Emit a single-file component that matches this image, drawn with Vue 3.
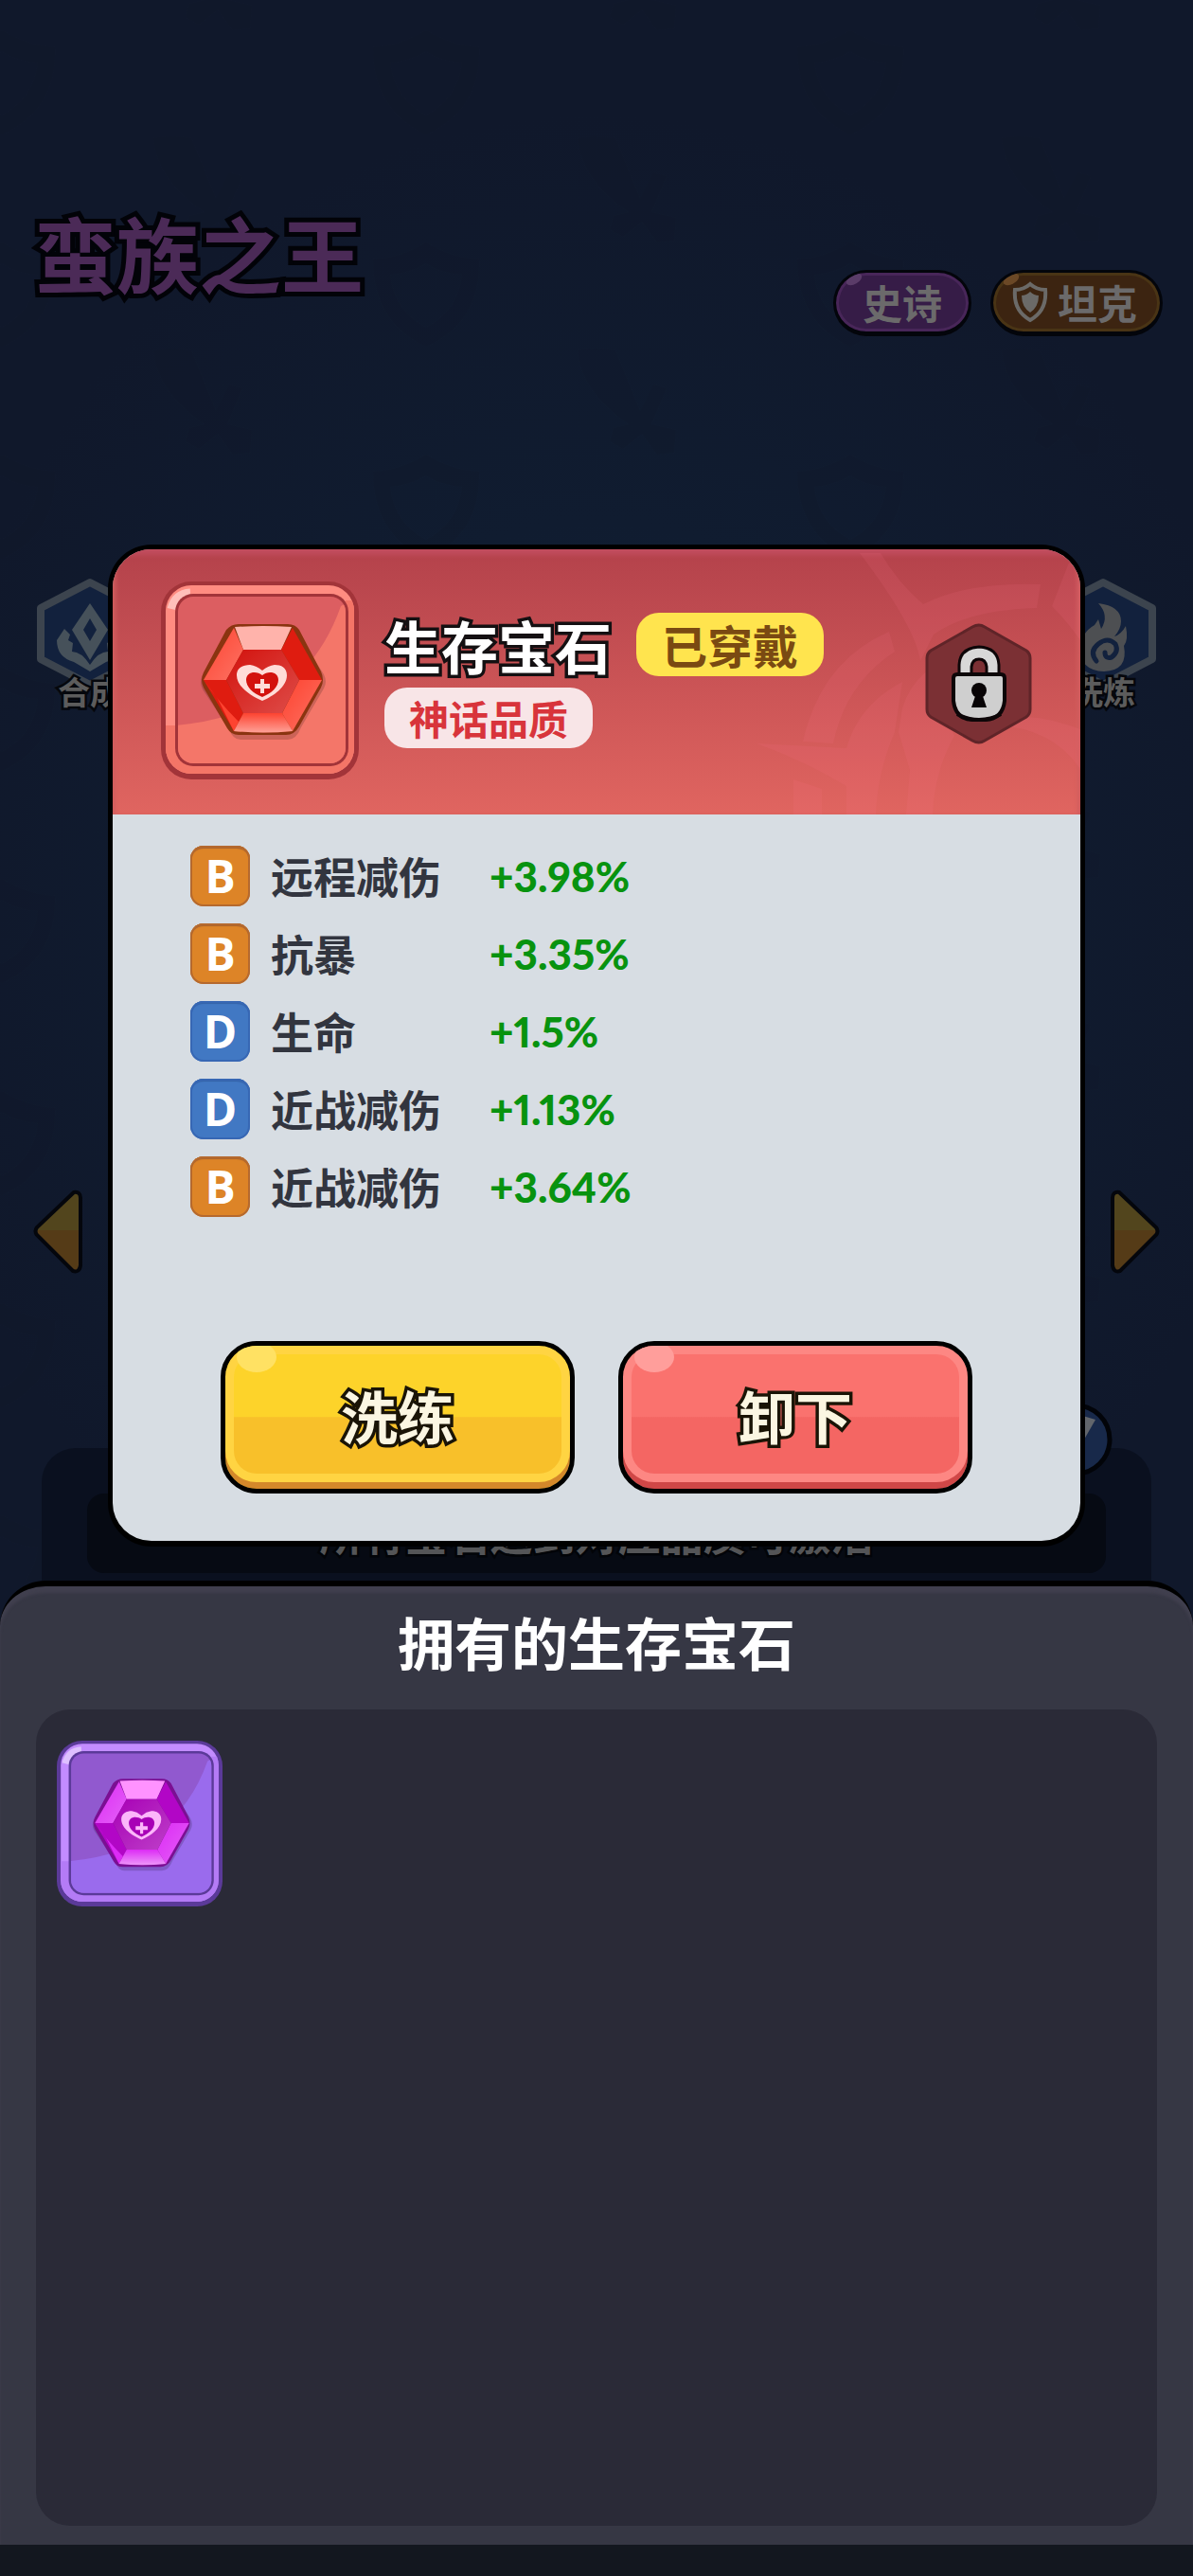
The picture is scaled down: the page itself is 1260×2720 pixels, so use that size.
<script setup>
import { ref } from "vue";

const stats = [
  { grade: "B", name: "远程减伤", value: "+3.98%" },
  { grade: "B", name: "抗暴", value: "+3.35%" },
  { grade: "D", name: "生命", value: "+1.5%" },
  { grade: "D", name: "近战减伤", value: "+1.13%" },
  { grade: "B", name: "近战减伤", value: "+3.64%" },
];

const locked = ref(true);
const worn = ref(true);

function toggleLock() {
  locked.value = !locked.value;
}
</script>

<template>
  <div class="page">
    <!-- shared gem tile, coloured through the --g-* variables -->
    <svg class="defs" width="0" height="0" aria-hidden="true">
      <defs>
        <linearGradient id="shine" x1="0" y1="0" x2="1" y2="1">
          <stop offset="0" stop-color="#fff" stop-opacity="0" />
          <stop offset="1" stop-color="#fff" stop-opacity="0.25" />
        </linearGradient>
        <linearGradient id="shineDown" x1="0" y1="0" x2="0" y2="1">
          <stop offset="0" stop-color="#fff" stop-opacity="0" />
          <stop offset="1" stop-color="#fff" stop-opacity="0.5" />
        </linearGradient>
        <clipPath id="tileInner">
          <rect x="18" y="16" width="177" height="176" rx="16" />
        </clipPath>
        <clipPath id="tileFrame">
          <rect x="5" y="4" width="199" height="199" rx="27" />
        </clipPath>
      </defs>
      <symbol id="gemTile" viewBox="0 0 209 209">
        <rect class="g-line" width="209" height="209" rx="32" />
        <g clip-path="url(#tileFrame)">
          <rect class="g-frame" width="209" height="209" />
          <path class="g-frame-low" d="M0 152 H209 V209 H0z M195 20 H209 V209 H195z" />
        </g>
        <path d="M11 29 Q15 13 31 12" fill="none" stroke="#fff" stroke-opacity="0.45" stroke-width="9" />
        <rect class="g-line" x="15" y="13" width="183" height="182" rx="19" />
        <g clip-path="url(#tileInner)">
          <rect class="g-bg" x="15" y="13" width="183" height="182" />
          <path class="g-bg-low" d="M15 152 Q150 140 190 26 L200 20 V200 H15z" />
        </g>
        <g class="g-stone">
          <path d="M84 54 H136 Q144 54 148 60 L172 98 Q176 106 172 113 L148 154 Q143 167 134 167 H84 Q76 167 72 156 L44 114 Q40 106 44 99 L70 60 Q75 54 84 54z" fill="#000" fill-opacity="0.16" />
          <path class="g-edge" d="M82 45 H134 Q142 45 146 51 L169 95 Q173 104 169 112 L146 153 Q141 162 132 162 H82 Q74 162 70 155 L45 112 Q41 104 45 96 L69 51 Q74 45 82 45z" />
          <path class="g-top" d="M78 48 Q108 46 138 48 L127 72 H87z" />
          <path class="g-left" d="M77 49 L87 72 L69 104 H45z" />
          <path class="g-right" d="M139 49 L127 72 L146 104 H170z" />
          <path class="g-right" d="M45 104 H69 L87 139 L77 158z" />
          <path class="g-left" d="M45 104 L60 124 L77 158 L82 148 Q60 126 45 104z" />
          <path class="g-left" d="M170 104 H146 L128 139 L139 158z" />
          <path class="g-left" d="M77 158 L87 139 H128 L139 158 Q108 161 77 158z" />
          <path d="M77 158 L87 139 H128 L139 158 Q108 161 77 158z" fill="url(#shineDown)" />
          <path d="M77 49 L87 72 L69 104 H45z" fill="url(#shine)" />
          <path d="M170 104 H146 L128 139 L139 158z" fill="url(#shine)" />
          <path class="g-core" d="M87 72 H127 L146 104 L128 139 H87 L69 104z" />
          <path d="M87 72 H127 L146 104 L128 139 H87 L69 104z" fill="url(#shine)" />
          <path class="g-mark" d="M107 126 C95 121 80 111 80 99 C80 91 87 88 94 88 Q101 89 107 94 Q113 89 120 88 C127 88 133 91 133 99 C133 111 119 121 107 126z" />
          <path class="g-core" d="M107 122 C97 118 90 111 90 104 C90 95 101 94 107 99 C113 94 124 95 124 104 C124 111 117 118 107 122z" />
          <path class="g-mark" d="M105 103 h4 v5 h6 v5 h-6 v5 h-4 v-5 h-6 v-5 h6z" />
        </g>
      </symbol>
    </svg>

    <main class="stage">
      <svg class="stage__pattern" width="100%" height="100%" aria-hidden="true">
        <defs>
          <pattern id="motif" x="60" y="144" width="448" height="224" patternUnits="userSpaceOnUse">
            <g fill="#0b1222" fill-opacity="0.14">
              <path d="M102 2 Q118 -2 142 2 L168 66 L182 38 L196 42 L180 80 L206 86 L204 110 L186 112 L170 90 L150 106 L136 98 L140 84 L156 80 Q106 46 102 2z" />
              <path d="M334 130 Q364 128 390 112 Q416 128 446 130 Q448 196 390 222 Q334 196 334 130z M352 146 Q356 184 390 202 Q424 184 428 146 Q404 144 390 134 Q374 144 352 146z" fill-rule="evenodd" />
            </g>
          </pattern>
        </defs>
        <rect width="100%" height="100%" fill="url(#motif)" />
      </svg>

      <header class="hero">
        <h1 class="hero__name">蛮族之王</h1>
        <div class="hero__tags">
          <span class="tag tag--epic">史诗</span>
          <span class="tag tag--tank">
            <svg width="38" height="44" viewBox="0 0 38 44" aria-hidden="true">
              <path d="M19 3 Q26 9 35 9 Q37 31 19 41 Q1 31 3 9 Q12 9 19 3z" fill="none" stroke="#6b6a68" stroke-width="4" />
              <path d="M19 11 Q23 15 28 15 Q28 27 19 33 Q10 27 10 15 Q15 15 19 11z" fill="#6b6a68" />
            </svg>
            坦克
          </span>
        </div>
      </header>

      <nav class="tools">
        <button class="tool" type="button">
          <svg class="tool__icon" width="114" height="118" viewBox="0 0 114 118" aria-hidden="true">
            <path d="M57 5 L109 32 V86 L57 113 L5 86 V32z" fill="#12213d" stroke="#3c444e" stroke-width="8" stroke-linejoin="round" />
            <path fill-rule="evenodd" d="M57 27 L76 55 L57 87 L38 55z M57 43 L50 55 L57 67 L64 55z" fill="#46515a" />
            <path d="M30 54 L22 66 Q22 84 40 89 L57 99 L74 89 Q92 84 92 66 L84 54 L78 60 L80 66 L75 69 L76 78 Q66 78 57 92 Q48 78 38 78 L39 69 L34 66 L36 60z" fill="#46515a" />
          </svg>
          <span class="tool__label">合成</span>
        </button>
        <button class="tool" type="button">
          <svg class="tool__icon" width="114" height="118" viewBox="0 0 114 118" aria-hidden="true">
            <path d="M57 5 L109 32 V86 L57 113 L5 86 V32z" fill="#12213d" stroke="#3c444e" stroke-width="8" stroke-linejoin="round" />
            <path d="M52 27 Q76 30 76 46 Q76 54 69 62 Q76 60 81 51 Q84 66 79 72 Q84 98 58 99 Q32 98 33 74 Q34 58 48 50 L52 44 L55 54 Q64 40 52 27z" fill="#4d4f52" />
            <path d="M50 88 Q42 78 52 70 Q62 62 70 70 Q74 78 66 84 Q59 86 59 79" fill="none" stroke="#12213d" stroke-width="5" stroke-linecap="round" />
          </svg>
          <span class="tool__label">洗炼</span>
        </button>
      </nav>

      <div class="pager">
        <button class="pager__btn" type="button" aria-label="上一个">
          <svg width="53" height="90" viewBox="0 0 53 90" aria-hidden="true">
            <path d="M43 3 Q50 2 50 9 V80 Q49 88 42 86 L4 48 Q1 44 4 40z" fill="#553b17" />
            <path d="M43 3 Q50 2 50 9 V43 H3z" fill="#52451d" />
            <path d="M43 3 Q50 2 50 9 V80 Q49 88 42 86 L4 48 Q1 44 4 40z" fill="none" stroke="#04060c" stroke-width="4" />
          </svg>
        </button>
        <button class="pager__btn pager__btn--next" type="button" aria-label="下一个">
          <svg width="53" height="90" viewBox="0 0 53 90" aria-hidden="true">
            <path d="M43 3 Q50 2 50 9 V80 Q49 88 42 86 L4 48 Q1 44 4 40z" fill="#553b17" />
            <path d="M43 3 Q50 2 50 9 V43 H3z" fill="#52451d" />
            <path d="M43 3 Q50 2 50 9 V80 Q49 88 42 86 L4 48 Q1 44 4 40z" fill="none" stroke="#04060c" stroke-width="4" />
          </svg>
        </button>
      </div>

      <section class="require">
        <span class="require__badge">
          <svg width="78" height="78" viewBox="0 0 78 78" aria-hidden="true">
            <circle cx="39" cy="39" r="36" fill="#18294a" stroke="#020409" stroke-width="5" />
            <path d="M20 6 L60 18 L44 46 L24 40z" fill="#62666c" />
          </svg>
        </span>
        <p class="require__text">所有宝石达到对应品质可激活</p>
      </section>
    </main>

    <section class="sheet">
      <h2 class="sheet__title">拥有的生存宝石</h2>
      <div class="sheet__bag">
        <button class="gem gem--purple" type="button" aria-label="生存宝石">
          <svg width="175" height="175"><use href="#gemTile" /></svg>
        </button>
      </div>
    </section>
    <footer class="home-bar"></footer>

    <section class="modal" role="dialog" aria-labelledby="gem-name">
      <div class="modal__header">
        <svg class="modal__emblem" width="350" height="280" viewBox="0 0 350 280" aria-hidden="true">
          <g fill="#ff7a94" fill-opacity="0.11">
            <path d="M117 4 L139 4 Q158 36 184 58 Q232 34 308 37 L304 62 Q232 64 195 90 L181 118 Q176 82 117 4z" />
            <path d="M320 60 L338 14 Q350 22 350 44 V96 Q336 76 320 60z" />
            <path d="M148 87 L154 108 Q102 142 89 205 L57 203 Q76 118 148 87z" />
            <path d="M8 205 L103 210 Q116 164 162 140 L154 193 Q136 234 134 280 H103 V250 Q60 224 8 205z" />
            <path d="M47 243 L77 253 V280 H47z" />
            <path d="M158 193 L162 168 Q176 120 240 104 L200 150 L217 197 Q196 234 194 280 H166 L170 233z" />
            <path d="M217 197 Q270 160 350 190 V232 Q320 188 260 186 Q230 190 217 197z" />
          </g>
        </svg>
        <div class="gem gem--red">
          <svg width="209" height="209"><use href="#gemTile" /></svg>
        </div>
        <div class="modal__info">
          <div class="modal__name-row">
            <h2 id="gem-name" class="modal__name">生存宝石</h2>
            <span v-if="worn" class="pill pill--worn">已穿戴</span>
          </div>
          <span class="pill pill--quality">神话品质</span>
        </div>
        <button class="lock" type="button" aria-label="锁定" :aria-pressed="locked" @click="toggleLock">
          <svg width="113" height="128" viewBox="0 0 113 128" aria-hidden="true">
            <path d="M50 4 Q57 0 63 4 L107 29 Q111 32 111 37 V91 Q111 96 107 99 L63 124 Q57 128 50 124 L6 99 Q2 96 2 91 V37 Q2 32 6 29z" fill="#7b3034" stroke="#5f2428" stroke-width="3" />
            <path d="M36 54 V44 Q37 26 57 25 Q77 26 78 44 V54 H65 V46 Q64 38 57 38 Q50 38 49 46 V54z" fill="#d8d8d8" stroke="#0d0608" stroke-width="3" />
            <path d="M34 54 H80 Q84 54 84 58 V82 Q82 101 64 102 H50 Q32 101 30 82 V58 Q30 54 34 54z" fill="#cfcfcf" stroke="#0d0608" stroke-width="4" />
            <path d="M34 96 Q44 102 57 102 Q70 102 80 96" fill="none" stroke="#0d0608" stroke-width="4" />
            <circle cx="57" cy="71" r="8" fill="#080406" />
            <path d="M54 74 H60 L65 89 H49z" fill="#080406" />
          </svg>
        </button>
      </div>

      <div class="modal__body">
        <ul class="stats">
          <li v-for="(stat, i) in stats" :key="i" class="stat">
            <span class="stat__grade" :class="'stat__grade--' + stat.grade.toLowerCase()">{{ stat.grade }}</span>
            <span class="stat__name">{{ stat.name }}</span>
            <span class="stat__value">{{ stat.value }}</span>
          </li>
        </ul>
        <div class="modal__actions">
          <button class="btn btn--yellow" type="button"><span class="btn__face">洗练</span></button>
          <button class="btn btn--red" type="button" @click="worn = false"><span class="btn__face">卸下</span></button>
        </div>
      </div>
    </section>
  </div>
</template>

<style>
body {
  background: #13171f;
}
</style>

<style scoped>
.page {
  position: relative;
  display: flex;
  flex-direction: column;
  min-height: 100vh;
  overflow: hidden;
  font-family: "Noto Sans CJK SC", sans-serif;
  font-weight: 700;
  background: radial-gradient(ellipse 720px 860px at 50% 980px, #10213a 0%, #101c30 50%, #10182b 100%);
}

h1,
h2,
p,
ul {
  margin: 0;
  padding: 0;
}

button {
  padding: 0;
  border: 0;
  background: none;
  font: inherit;
  cursor: pointer;
}

svg {
  display: block;
}

.defs {
  position: absolute;
}

/* stage */
.stage {
  position: relative;
  display: flex;
  flex-direction: column;
  padding-top: 220px;
}

.stage__pattern {
  position: absolute;
  inset: 0;
}

.hero {
  position: relative;
  display: flex;
  justify-content: space-between;
  align-items: flex-end;
  height: 135px;
  padding: 0 32px 0 36px;
}

.hero__name {
  align-self: flex-start;
  font-size: 87px;
  line-height: 92px;
  color: #4b2a57;
  -webkit-text-stroke: 10px #020308;
  paint-order: stroke fill;
  text-shadow: 0 4px 0 #020308;
}

.hero__tags {
  display: flex;
  gap: 20px;
}

.tag {
  position: relative;
  display: flex;
  align-items: center;
  gap: 10px;
  height: 70px;
  box-sizing: border-box;
  border: 3px solid #03050b;
  border-bottom-width: 5px;
  border-radius: 36px;
  font-size: 42px;
  line-height: 60px;
  color: #6b6a6b;
  overflow: hidden;
}

.tag::before {
  content: "";
  position: absolute;
  left: 10px;
  top: 2px;
  width: 18px;
  height: 10px;
  border-radius: 50%;
  transform: rotate(-30deg);
}

.tag--epic {
  padding: 0 28px;
  background: #361c47;
  box-shadow: inset 0 0 0 3px #482659;
}

.tag--epic::before {
  background: #5a3c68;
}

.tag--tank {
  padding: 0 24px 0 20px;
  background: #3c2411;
  box-shadow: inset 0 0 0 3px #493415;
}

.tag--tank::before {
  background: #6b4826;
}

.tools {
  position: relative;
  display: flex;
  justify-content: space-between;
  height: 140px;
  margin: 255px 38px 0;
}

.tool {
  display: flex;
  flex-direction: column;
  align-items: center;
}

.tool__label {
  margin-top: -18px;
  font-size: 34px;
  line-height: 40px;
  color: #5c5c5c;
  -webkit-text-stroke: 5px #05070c;
  paint-order: stroke fill;
}

.pager {
  position: relative;
  display: flex;
  justify-content: space-between;
  margin: 506px 35px 0;
}

.pager__btn--next {
  transform: scaleX(-1);
}

.require {
  position: relative;
  height: 140px;
  margin: 183px 44px 0;
  padding: 48px 48px 0;
  box-sizing: border-box;
  border-radius: 36px 36px 0 0;
  background: #0a101f;
}

.require__badge {
  position: absolute;
  top: -48px;
  right: 41px;
}

.require__text {
  height: 84px;
  border-radius: 18px;
  font-size: 45px;
  line-height: 84px;
  text-align: center;
  color: #545557;
  background: #060a13;
  -webkit-text-stroke: 5px #020408;
  paint-order: stroke fill;
}

/* bottom sheet */
.sheet {
  position: relative;
  flex: 1;
  display: flex;
  flex-direction: column;
  gap: 38px;
  padding: 24px 38px 20px;
  border-top: 6px solid #000;
  border-radius: 48px 48px 0 0;
  background: #363744;
  box-shadow: inset 0 7px 3px #403f4e;
}

.sheet__title {
  font-size: 60px;
  line-height: 68px;
  text-align: center;
  color: #fff;
}

.sheet__bag {
  flex: 1;
  display: flex;
  flex-wrap: wrap;
  align-content: flex-start;
  gap: 20px;
  padding: 33px 22px;
  border-radius: 36px;
  background: #2a2a37;
}

.home-bar {
  position: relative;
  height: 33px;
  background: #13171f;
}

/* gem colours */
.gem--red {
  --g-line: #a23439;
  --g-frame: #ff8c81;
  --g-frame-low: #f47567;
  --g-bg: #dc5e61;
  --g-bg-low: #f47669;
  --g-edge: #8a3410;
  --g-top: #ffb3ab;
  --g-left: #fd4330;
  --g-right: #df1c10;
  --g-core: #d3120d;
  --g-mark: #ffdcd8;
  --g-scale: 1;
}

.gem--purple {
  --g-line: #5b3a99;
  --g-frame: #c38cff;
  --g-frame-low: #b47bf6;
  --g-bg: #9159cf;
  --g-bg-low: #9a6bed;
  --g-edge: #7b0f93;
  --g-top: #ff92ff;
  --g-left: #dc2bf5;
  --g-right: #b206c6;
  --g-core: #a800b6;
  --g-mark: #fcb6fa;
  --g-scale: 0.95;
}

.g-line { fill: var(--g-line); }
.g-frame { fill: var(--g-frame); }
.g-frame-low { fill: var(--g-frame-low); }
.g-bg { fill: var(--g-bg); }
.g-bg-low { fill: var(--g-bg-low); }
.g-edge { fill: var(--g-edge); }
.g-top { fill: var(--g-top); }
.g-left { fill: var(--g-left); }
.g-right { fill: var(--g-right); }
.g-core { fill: var(--g-core); }
.g-mark { fill: var(--g-mark); }

.g-stone {
  transform: scale(var(--g-scale));
  transform-origin: 107px 104px;
}

/* modal */
.modal {
  position: absolute;
  top: 575px;
  left: 114px;
  right: 114px;
  border: 5px solid #000;
  border-bottom-width: 6px;
  border-radius: 46px;
  background: #d7dde3;
  overflow: hidden;
}

.modal__header {
  position: relative;
  display: flex;
  align-items: center;
  height: 280px;
  padding: 0 51px 4px;
  box-sizing: border-box;
  background: linear-gradient(#b4424b, #e06560);
  box-shadow: inset 0 8px 5px -2px #c14d5e, inset 5px 0 5px -2px #d3605f, inset -5px 0 5px -2px #d3605f;
}

.modal__emblem {
  position: absolute;
  top: 0;
  right: 0;
}

.modal__info {
  flex: 1;
  display: flex;
  flex-direction: column;
  align-items: flex-start;
  gap: 12px;
  margin-left: 27px;
}

.modal__name-row {
  display: flex;
  align-items: center;
  gap: 26px;
}

.modal__name {
  font-size: 60px;
  line-height: 67px;
  color: #fff;
  -webkit-text-stroke: 7px #141012;
  paint-order: stroke fill;
}

.pill {
  border-radius: 24px;
}

.pill--worn {
  padding: 0 27px;
  font-size: 48px;
  line-height: 67px;
  color: #7a4a12;
  background: #ffe44e;
}

.pill--quality {
  padding: 0 26px;
  font-size: 42px;
  line-height: 64px;
  color: #d8343b;
  background: #f8e5e7;
}

.lock {
  position: relative;
  margin-top: 8px;
}

.modal__body {
  padding: 33px 82px 50px;
}

.stats {
  display: flex;
  flex-direction: column;
  gap: 18px;
  list-style: none;
}

.stat {
  display: grid;
  grid-template-columns: 63px 209px auto;
  column-gap: 22px;
  align-items: center;
  height: 64px;
}

.stat__grade {
  height: 64px;
  box-sizing: border-box;
  border-radius: 14px;
  font-family: "Open Sans", sans-serif;
  font-size: 48px;
  line-height: 64px;
  text-align: center;
  color: #fff;
}

.stat__grade--b {
  background: #dd8427;
  box-shadow: inset 0 0 0 2px #b5692e, inset 0 3px 1px #a9622c;
}

.stat__grade--d {
  background: #4178c3;
  box-shadow: inset 0 0 0 2px #3767b4, inset 0 3px 1px #3563a8;
}

.stat__name {
  font-size: 45px;
  line-height: 64px;
  color: #32353f;
}

.stat__value {
  font-family: Lato, sans-serif;
  font-size: 44px;
  font-weight: 900;
  font-variant-numeric: proportional-nums;
  line-height: 64px;
  color: #08930f;
}

.modal__actions {
  display: flex;
  justify-content: center;
  gap: 46px;
  margin-top: 131px;
}

.btn {
  position: relative;
  width: 374px;
  height: 161px;
  padding: 9px 9px 16px;
  box-sizing: border-box;
  border: 5px solid #000;
  border-radius: 38px;
  overflow: hidden;
}

.btn::after {
  content: "";
  position: absolute;
  top: -4px;
  left: 12px;
  width: 42px;
  height: 32px;
  border-radius: 50%;
}

.btn__face {
  display: block;
  height: 100%;
  border-radius: 24px;
  font-size: 60px;
  line-height: 128px;
  color: #fbf6e2;
  -webkit-text-stroke: 7px #1a1406;
  paint-order: stroke fill;
}

.btn--yellow {
  background: #ffd442;
  box-shadow: inset 0 -7px 0 #d4882a;
}

.btn--yellow .btn__face {
  background: linear-gradient(#fdd32a 52%, #f8c02a 53%);
}

.btn--yellow::after {
  background: #ffe163;
}

.btn--red {
  background: #fd8783;
  box-shadow: inset 0 -7px 0 #d04747;
}

.btn--red .btn__face {
  background: linear-gradient(#fa726e 52%, #f46663 53%);
}

.btn--red::after {
  background: #ff9e9b;
}
</style>
